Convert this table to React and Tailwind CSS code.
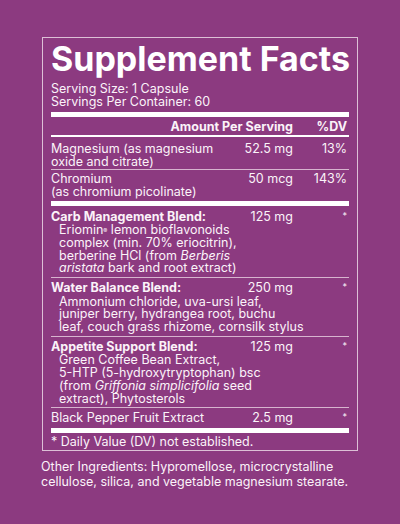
export default function App() {
  return (
    <main
      className="w-[400px] h-[524px] bg-[#8c3a80] text-[#fbf3f9] overflow-hidden"
      style={{ fontFamily: 'Inter, "Liberation Sans", sans-serif' }}
    >
      <div className="pt-[37px] px-[42px]">
        {/* Facts panel */}
        <section className="border border-[#dcc0d6] px-[8px] pt-[3px] pb-[2px]">
          <h1 className="text-[34px] leading-[36px] font-bold text-white whitespace-nowrap">
            Supplement Facts
          </h1>
          <div className="text-[12.5px] leading-[13px] mt-[5px]">
            <p>Serving Size: 1 Capsule</p>
            <p>Servings Per Container: 60</p>
          </div>

          <div className="h-[5px] bg-white mt-[4px]"></div>

          {/* Header row */}
          <div className="grid grid-cols-[1fr_54px] pr-[2px] text-[12.5px] leading-[13px] font-bold pt-[3px] pb-[2px] border-b-2 border-white">
            <span className="text-right">Amount Per Serving</span>
            <span className="text-right">%DV</span>
          </div>

          <div className="grid grid-cols-[1fr_70px_54px] pr-[2px] text-[12.5px] leading-[13px] pt-[5px] pb-[1px] border-b border-[#d7b4cf]">
            <span className="whitespace-nowrap">Magnesium (as magnesium<br />oxide and citrate)</span>
            <span className="text-right">52.5 mg</span>
            <span className="text-right">13%</span>
          </div>
          <div className="grid grid-cols-[1fr_70px_54px] pr-[2px] text-[12.5px] leading-[13px] pt-[1.5px] pb-[3px]">
            <span className="whitespace-nowrap">Chromium<br />(as chromium picolinate)</span>
            <span className="text-right">50 mcg</span>
            <span className="text-right">143%</span>
          </div>

          <div className="h-[5px] bg-white"></div>

          <Blend title="Carb Management Blend:" amount="125 mg" first>
            Eriomin<sup className="text-[6px] relative -top-[1px]">®</sup> lemon bioflavonoids<br />
            complex (min. 70% eriocitrin),<br />
            berberine HCl (from <i>Berberis</i><br />
            <i>aristata</i> bark and root extract)
          </Blend>
          <Blend title="Water Balance Blend:" amount="250 mg">
            Ammonium chloride, uva-ursi leaf,<br />
            juniper berry, hydrangea root, buchu<br />
            leaf, couch grass rhizome, cornsilk stylus
          </Blend>
          <Blend title="Appetite Support Blend:" amount="125 mg">
            Green Coffee Bean Extract,<br />
            5-HTP (5-hydroxytryptophan) bsc<br />
            (from <i>Griffonia simplicifolia</i> seed<br />
            extract), Phytosterols
          </Blend>

          <div className="grid grid-cols-[1fr_70px_54px] pr-[2px] text-[12.5px] leading-[13px] pt-[2.5px] pb-[4px]">
            <span>Black Pepper Fruit Extract</span>
            <span className="text-right">2.5 mg</span>
            <span className="text-right text-[9px] leading-[9px] pt-[1px]">*</span>
          </div>

          <div className="h-[5px] bg-white"></div>

          <p className="text-[12.5px] leading-[13px] pt-[2px]">* Daily Value (DV) not established.</p>
        </section>

        <p className="text-[12.5px] leading-[15px] mt-[8px] -ml-[1px] whitespace-nowrap">
          Other Ingredients: Hypromellose, microcrystalline<br />
          cellulose, silica, and vegetable magnesium stearate.
        </p>
      </div>
    </main>
  );
}

function Blend({ title, amount, first, children }) {
  return (
    <div
      className={
        'text-[12.5px] pb-[2px] border-b border-[#d7b4cf] ' + (first ? 'pt-[4px]' : 'pt-[3px]')
      }
    >
      <div className="grid grid-cols-[1fr_70px_54px] pr-[2px] leading-[13px]">
        <span className="font-bold whitespace-nowrap">{title}</span>
        <span className="text-right">{amount}</span>
        <span className="text-right text-[9px] leading-[9px] pt-[1px]">*</span>
      </div>
      <p className="pl-[8px] mt-[1.5px] leading-[12.75px] whitespace-nowrap">{children}</p>
    </div>
  );
}
